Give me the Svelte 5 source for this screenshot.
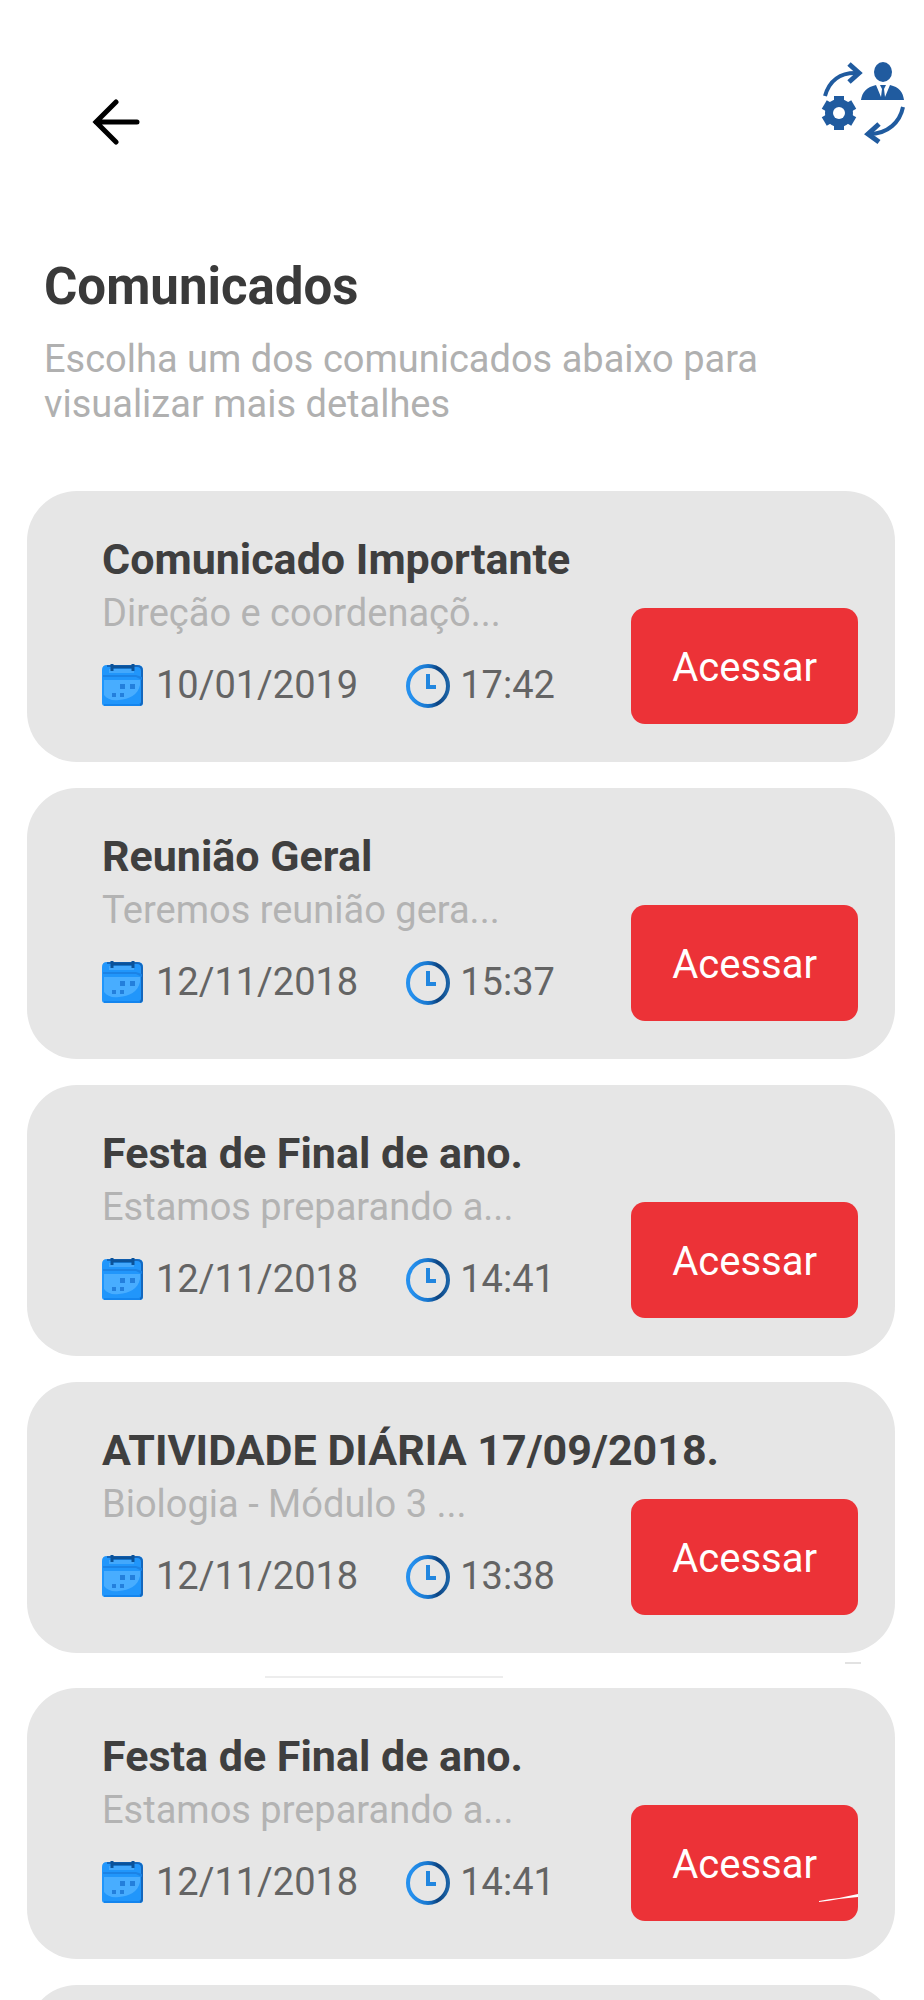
<script lang="ts">
    interface Notice {
        title: string;
        summary: string;
        date: string;
        time: string;
    }

    const notices: Notice[] = [
        { title: "Comunicado Importante", summary: "Direção e coordenaçõ...", date: "10/01/2019", time: "17:42" },
        { title: "Reunião Geral", summary: "Teremos reunião gera...", date: "12/11/2018", time: "15:37" },
        { title: "Festa de Final de ano.", summary: "Estamos preparando a...", date: "12/11/2018", time: "14:41" },
        { title: "ATIVIDADE DIÁRIA 17/09/2018.", summary: "Biologia - Módulo 3 ...", date: "12/11/2018", time: "13:38" },
    ];

    const older: Notice[] = [
        { title: "Festa de Final de ano.", summary: "Estamos preparando a...", date: "12/11/2018", time: "14:41" },
    ];
</script>

{#snippet calendarIcon()}
    <svg class="icon" viewBox="0 2 44 44" aria-hidden="true">
        <path d="M0 8q0-5 5-5h30q6 0 6 5v33q0 3-3 3H3q-3 0-3-3z" fill="#2196fb" />
        <path d="M5 4h30q5 0 5 5v31q0 3-3 3" fill="none" stroke="#1467bd" stroke-width="2" />
        <path d="M2 18h36v5c-2 10-11 14-21 15-7 1-12-1-15-5z" fill="#48adff" />
        <path d="M1 15h33l6 3v-3l-6-2H1z" fill="#1b83e6" />
        <path d="M7 9h25" stroke="#43a8fc" stroke-width="4" />
        <path d="M10 5h21M10 2v7M31 2v7" fill="none" stroke="#0b5299" stroke-width="3" />
        <path d="M18 22h5v5h-5zM28 22h5v5h-5zM10 31h4v4h-4zM18 31h4v4h-4z" fill="#237fdc" />
        <path d="M2 43h36" stroke="#1485ee" stroke-width="2" />
    </svg>
{/snippet}

{#snippet clockIcon()}
    <svg class="icon" viewBox="0 0 44 44" aria-hidden="true">
        <defs>
            <linearGradient id="ring" x1="0" y1="0" x2="1" y2="0">
                <stop offset="0.1" stop-color="#2590ee" />
                <stop offset="0.5" stop-color="#1876cd" />
                <stop offset="0.75" stop-color="#0c4380" />
                <stop offset="1" stop-color="#1b64a8" />
            </linearGradient>
        </defs>
        <circle cx="22" cy="22" r="20" fill="none" stroke="url(#ring)" stroke-width="4" />
        <path d="M22 10v13h8" fill="none" stroke="#2186df" stroke-width="4" />
    </svg>
{/snippet}

{#snippet card(notice: Notice, marked: boolean)}
    <li class="card">
        <h2>{notice.title}</h2>
        <div class="row">
            <div class="details">
                <p class="summary">{notice.summary}</p>
                <div class="when">
                    <span class="date">{@render calendarIcon()}{notice.date}</span>
                    <span class="time">{@render clockIcon()}{notice.time}</span>
                </div>
            </div>
            <button class="access" type="button">
                Acessar
                {#if marked}
                    <svg class="streak" viewBox="0 0 39 9" aria-hidden="true">
                        <path d="M0 7q10-2 20-3L39 0v3l-19 2Q10 7 0 8z" fill="#fff" />
                    </svg>
                {/if}
            </button>
        </div>
    </li>
{/snippet}

<div class="screen">
    <header>
        <button class="back" type="button" aria-label="Voltar">
            <svg viewBox="0 0 48 46" aria-hidden="true">
                <path d="M24 3L4 23l20 20M4 23h41" fill="none" stroke="#000" stroke-width="5" stroke-linecap="round" />
            </svg>
        </button>
        <svg class="logo" viewBox="0 0 84 80" aria-hidden="true">
            <g fill="none" stroke="#205b9f" stroke-width="4">
                <path d="M3 34C7 19 18 10 36 11" />
                <path d="M27 2l10 9-10 9" stroke-width="5" />
                <path d="M81 45c-3 15-15 27-34 27" />
                <path d="M57 62l-11 10 11 8" stroke-width="5" />
            </g>
            <g fill="#205b9f">
                <ellipse cx="61" cy="10" rx="9" ry="10" />
                <path d="M39 38c1-8 6-13 15-15l5 12 1-8-2-4h6l-2 4 1 8 5-12c9 2 13 7 14 15z" />
                <circle cx="17" cy="51" r="14" />
                {#each [0, 60, 120, 180, 240, 300] as angle}
                    <path d="M12 34h10v8H12z" transform="rotate({angle} 17 51)" />
                {/each}
            </g>
            <circle cx="17" cy="51" r="6" fill="#fff" />
        </svg>
    </header>

    <main>
        <div class="intro">
            <h1>Comunicados</h1>
            <p>Escolha um dos comunicados abaixo para visualizar mais detalhes</p>
        </div>

        <ul class="cards">
            {#each notices as notice}
                {@render card(notice, false)}
            {/each}
        </ul>

        <div class="divider">
            <span class="line"></span>
            <span class="tick"></span>
        </div>

        <ul class="cards">
            {#each older as notice}
                {@render card(notice, true)}
            {/each}
            <li class="card empty"></li>
        </ul>
    </main>
</div>

<style>
    :global(body) {
        background-color: #fff;
        font-family: Roboto, "Liberation Sans", sans-serif;
    }

    .screen {
        height: 100vh;
        overflow-y: auto;
        scrollbar-width: none;
    }

    header {
        display: flex;
        justify-content: space-between;
        align-items: flex-end;
        padding: 62px 18px 0 92px;
    }

    .back {
        display: block;
        padding: 0;
        margin-bottom: -3px;
        border: none;
        background: none;
        cursor: pointer;
    }

    .back svg {
        display: block;
        width: 48px;
        height: 46px;
    }

    .logo {
        width: 84px;
        height: 80px;
        overflow: visible;
    }

    .intro {
        padding: 115px 44px 64px;
    }

    h1,
    h2,
    p {
        margin: 0;
    }

    h1 {
        margin-bottom: 20px;
        color: #3a3a3a;
        font-size: 51px;
        line-height: 60px;
        font-weight: 700;
    }

    .intro p {
        max-width: 760px;
        color: #b0b0b0;
        font-size: 38px;
        line-height: 45px;
    }

    .cards {
        display: flex;
        flex-direction: column;
        gap: 26px;
        margin: 0;
        padding: 0 29px 0 27px;
        list-style: none;
    }

    .card {
        padding: 43px 37px 38px 75px;
        border-radius: 50px;
        background-color: #e6e6e6;
    }

    .empty {
        min-height: 190px;
    }

    h2 {
        margin-bottom: 7px;
        color: #3f3f3f;
        font-size: 43px;
        line-height: 50px;
        font-weight: 700;
    }

    .row {
        display: flex;
        justify-content: space-between;
        align-items: flex-end;
    }

    .details {
        padding-bottom: 16px;
    }

    .summary {
        margin-bottom: 27px;
        color: #b3b3b3;
        font-size: 38px;
        line-height: 45px;
    }

    .when {
        display: flex;
        gap: 48px;
        color: #646464;
        font-size: 38px;
        line-height: 45px;
    }

    .date,
    .time {
        display: flex;
        align-items: center;
        gap: 10px;
    }

    .icon {
        width: 44px;
        height: 44px;
    }

    .access {
        position: relative;
        padding: 3px 41px 0;
        height: 116px;
        border: none;
        border-radius: 14px;
        background-color: #ec3237;
        color: #fff;
        font-family: inherit;
        font-size: 40px;
        cursor: pointer;
    }

    .streak {
        position: absolute;
        right: 0;
        bottom: 18px;
        width: 39px;
        height: 9px;
    }

    .divider {
        display: flex;
        justify-content: space-between;
        align-items: flex-end;
        height: 25px;
        padding: 0 63px 10px 265px;
    }

    .line {
        width: 238px;
        height: 2px;
        background-color: #ededed;
    }

    .tick {
        align-self: center;
        width: 16px;
        height: 2px;
        margin-bottom: 6px;
        background-color: #e2e2e2;
    }
</style>
